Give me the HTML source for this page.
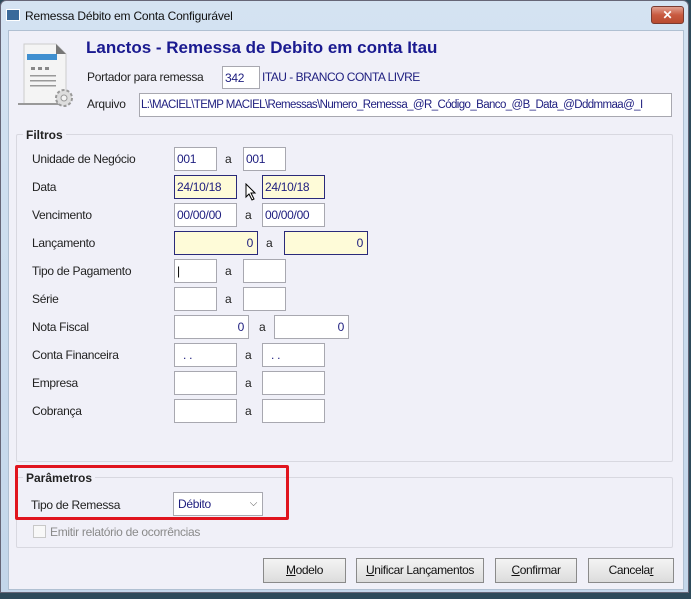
<!DOCTYPE html>
<html><head><meta charset="utf-8"><style>
*{margin:0;padding:0;box-sizing:border-box}
body{width:691px;height:599px;overflow:hidden;background:#2d4a5a;font-family:"Liberation Sans",sans-serif;font-size:12px;color:#222;position:relative}
.a{position:absolute}
.win{left:0;top:0;width:689px;height:593px;background:linear-gradient(#d4e3f2,#c3d6ea);border:1px solid #667;border-radius:6px 6px 0 0}
.body{left:8px;top:30px;width:676px;height:560px;background:#f0f0f8;border:1px solid #b0c0d2}
.lbl{font-size:12px;color:#222;letter-spacing:-0.3px}
.in{background:#fff;border:1px solid #a8a8b0;height:24px;color:#202080;font-size:12px;padding:4px 2px;line-height:15px;white-space:nowrap;overflow:hidden;letter-spacing:-0.3px}
.y{background:#fefbd8;border:1px solid #2a2a7a}
.r{text-align:right;padding-right:4px}
.grp{border:1px solid #d8d8e0;border-radius:2px}
.gt{background:#f0f0f8;font-weight:bold;font-size:12px;padding:0 3px}
.btn{height:25px;top:558px;background:linear-gradient(#f4f4f4,#dcdcdc);border:1px solid #8a8a8a;text-align:center;line-height:23px;font-size:12px;color:#111;letter-spacing:-0.4px}
</style></head><body>
<div class="a win"></div>
<div class="a" style="left:6px;top:9px;width:14px;height:12px;background:#3a6a9a;border:1px solid #fff"></div>
<div class="a" style="left:25px;top:9px;font-size:12px;color:#111;letter-spacing:-0.2px">Remessa Débito em Conta Configurável</div>
<div class="a" style="left:651px;top:6px;width:33px;height:18px;border-radius:3px;border:1px solid #7a3a30;background:linear-gradient(#e0a090,#c85a40 50%,#b84a30);color:#fff;font-weight:bold;text-align:center;line-height:16px;font-size:12px">✕</div>
<div class="a body"></div>
<svg class="a" style="left:14px;top:40px" width="62" height="70" viewBox="0 0 62 70">
<path d="M10 4h32l10 10v50H10z" fill="#f4f4f4" stroke="#ccc"/>
<path d="M42 4v10h10z" fill="#777"/>
<rect x="13" y="14" width="30" height="6" fill="#3f8fd0"/>
<rect x="17" y="27" width="4" height="3" fill="#888"/><rect x="24" y="27" width="4" height="3" fill="#888"/><rect x="31" y="27" width="4" height="3" fill="#888"/>
<rect x="16" y="35" width="26" height="1.5" fill="#999"/><rect x="16" y="40" width="26" height="1.5" fill="#999"/><rect x="16" y="45" width="26" height="1.5" fill="#999"/>
<rect x="4" y="63" width="46" height="2" fill="#999"/>
<circle cx="50" cy="58" r="8" fill="#ddd" stroke="#999" stroke-width="2" stroke-dasharray="3 2"/><circle cx="50" cy="58" r="3" fill="#f4f4f4" stroke="#999"/>
</svg>
<div class="a" style="left:86px;top:38px;font-size:17px;font-weight:bold;color:#1a1a90">Lanctos - Remessa de Debito em conta Itau</div>
<div class="a lbl" style="left:87px;top:70px">Portador para remessa</div>
<div class="a in" style="left:222px;top:66px;width:38px;height:23px">342</div>
<div class="a" style="left:262px;top:70px;color:#202080;font-size:12px;letter-spacing:-0.5px">ITAU - BRANCO CONTA LIVRE</div>
<div class="a lbl" style="left:87px;top:97px">Arquivo</div>
<div class="a in" style="left:139px;top:93px;width:533px;height:24px;padding-left:1px;font-size:11.5px;letter-spacing:-0.6px">L:\MACIEL\TEMP MACIEL\Remessas\Numero_Remessa_@R_Código_Banco_@B_Data_@Dddmmaa@_I</div>

<div class="a grp" style="left:16px;top:134px;width:657px;height:328px"></div>
<div class="a gt" style="left:23px;top:128px">Filtros</div>

<div class="a lbl" style="left:32px;top:152px">Unidade de Negócio</div>
<div class="a in" style="left:174px;top:147px;width:43px">001</div><div class="a lbl" style="left:225px;top:152px">a</div><div class="a in" style="left:243px;top:147px;width:43px">001</div>
<div class="a lbl" style="left:32px;top:180px">Data</div>
<div class="a in y" style="left:174px;top:175px;width:63px">24/10/18</div><div class="a in y" style="left:262px;top:175px;width:63px">24/10/18</div>
<svg class="a" style="left:245px;top:183px" width="12" height="18"><path d="M1 1v13l3-3 3 6 2-1-3-6h4z" fill="#fff" stroke="#000"/></svg>
<div class="a lbl" style="left:32px;top:208px">Vencimento</div>
<div class="a in" style="left:174px;top:203px;width:63px">00/00/00</div><div class="a lbl" style="left:245px;top:208px">a</div><div class="a in" style="left:262px;top:203px;width:63px">00/00/00</div>
<div class="a lbl" style="left:32px;top:236px">Lançamento</div>
<div class="a in y r" style="left:174px;top:231px;width:84px">0</div><div class="a lbl" style="left:266px;top:236px">a</div><div class="a in y r" style="left:284px;top:231px;width:84px">0</div>
<div class="a lbl" style="left:32px;top:264px">Tipo de Pagamento</div>
<div class="a in" style="left:174px;top:259px;width:43px;color:#000">|</div><div class="a lbl" style="left:225px;top:264px">a</div><div class="a in" style="left:243px;top:259px;width:43px"></div>
<div class="a lbl" style="left:32px;top:292px">Série</div>
<div class="a in" style="left:174px;top:287px;width:43px"></div><div class="a lbl" style="left:225px;top:292px">a</div><div class="a in" style="left:243px;top:287px;width:43px"></div>
<div class="a lbl" style="left:32px;top:320px">Nota Fiscal</div>
<div class="a in r" style="left:174px;top:315px;width:75px">0</div><div class="a lbl" style="left:259px;top:320px">a</div><div class="a in r" style="left:274px;top:315px;width:75px">0</div>
<div class="a lbl" style="left:32px;top:348px">Conta Financeira</div>
<div class="a in" style="left:174px;top:343px;width:63px;padding-left:8px">. .</div><div class="a lbl" style="left:245px;top:348px">a</div><div class="a in" style="left:262px;top:343px;width:63px;padding-left:8px">. .</div>
<div class="a lbl" style="left:32px;top:376px">Empresa</div>
<div class="a in" style="left:174px;top:371px;width:63px"></div><div class="a lbl" style="left:245px;top:376px">a</div><div class="a in" style="left:262px;top:371px;width:63px"></div>
<div class="a lbl" style="left:32px;top:404px">Cobrança</div>
<div class="a in" style="left:174px;top:399px;width:63px"></div><div class="a lbl" style="left:245px;top:404px">a</div><div class="a in" style="left:262px;top:399px;width:63px"></div>

<div class="a grp" style="left:16px;top:477px;width:657px;height:71px"></div>
<div class="a gt" style="left:23px;top:471px">Parâmetros</div>
<div class="a lbl" style="left:31px;top:498px">Tipo de Remessa</div>
<div class="a in" style="left:173px;top:492px;width:90px;height:24px;padding-left:4px">Débito<span style="position:absolute;right:5px;top:3px;color:#555;font-size:10px">⌵</span></div>
<div class="a" style="left:15px;top:465px;width:274px;height:55px;border:3px solid #e0141e;border-radius:2px"></div>
<div class="a" style="left:33px;top:525px;width:13px;height:13px;border:1px solid #c8c8c8;background:#f8f8f8"></div>
<div class="a" style="left:50px;top:525px;color:#8a8a8a;font-size:12px;letter-spacing:-0.3px">Emitir relatório de ocorrências</div>

<div class="a btn" style="left:263px;width:83px"><u>M</u>odelo</div>
<div class="a btn" style="left:356px;width:128px"><u>U</u>nificar Lançamentos</div>
<div class="a btn" style="left:495px;width:82px"><u>C</u>onfirmar</div>
<div class="a btn" style="left:588px;width:86px">Cancela<u>r</u></div>
</body></html>
